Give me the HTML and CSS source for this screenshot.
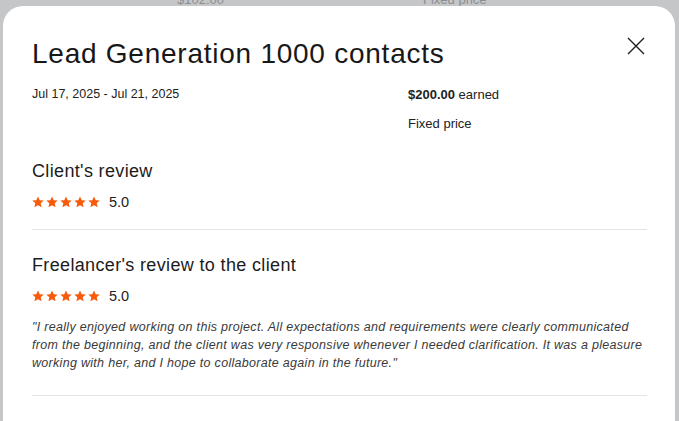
FILE: index.html
```html
<!DOCTYPE html>
<html>
<head>
    <title>Contract details</title>
    <link rel="stylesheet" href="styles.css">
</head>
<body>
    <div class="page-behind">
        <span class="behind-amount">$102.00</span>
        <span class="behind-type">Fixed price</span>
    </div>

    <div class="modal">
        <div class="modal-header">
            <h1>Lead Generation 1000 contacts</h1>
            <button class="close-button" aria-label="Close">
                <svg width="18" height="18" viewBox="0 0 18 18">
                    <path d="M1 1 L17 17 M17 1 L1 17" stroke="#1f1f1f" stroke-width="1.4" fill="none"/>
                </svg>
            </button>
        </div>

        <div class="contract-info">
            <div class="dates">Jul 17, 2025 - Jul 21, 2025</div>
            <div class="earnings">
                <p><strong>$200.00</strong> earned</p>
                <p>Fixed price</p>
            </div>
        </div>

        <div class="review client-review">
            <h2>Client's review</h2>
            <div class="rating">
                <span class="stars" data-count="5"></span>
                <span class="score">5.0</span>
            </div>
        </div>

        <div class="review freelancer-review">
            <h2>Freelancer's review to the client</h2>
            <div class="rating">
                <span class="stars" data-count="5"></span>
                <span class="score">5.0</span>
            </div>
            <p class="feedback">"I really enjoyed working on this project. All expectations and requirements were clearly communicated from the beginning, and the client was very responsive whenever I needed clarification. It was a pleasure working with her, and I hope to collaborate again in the future."</p>
        </div>
    </div>

    <script>
        // fill each rating with star icons
        var starSvg = '<svg width="12" height="12" viewBox="0 0 24 24"><path d="M12 1l3.4 7.3 8 .9-6 5.4 1.7 7.9L12 18.4l-7.1 4.1 1.7-7.9-6-5.4 8-.9z" fill="#f65a0a"/></svg>';
        document.querySelectorAll('.stars').forEach(function (el) {
            var count = parseInt(el.getAttribute('data-count'), 10);
            var html = '';
            for (var i = 0; i < count; i++) {
                html += starSvg;
            }
            el.innerHTML = html;
        });
    </script>
</body>
</html>
```

FILE: styles.css
```css
body {
    font-family: "Liberation Sans", Arial, sans-serif;
    background-color: #c5c6c8;
    margin: 0;
    padding: 0;
    color: #1f1f1f;
    overflow: hidden;
}

.page-behind {
    height: 6px;
    overflow: hidden;
    position: relative;
    color: #8c8e92;
    font-size: 13px;
}

.behind-amount {
    position: absolute;
    left: 177px;
    top: -8px;
}

.behind-type {
    position: absolute;
    left: 423px;
    top: -8px;
}

.modal {
    margin: 0 4px 0 3px;
    background-color: #ffffff;
    border-radius: 20px 20px 0 0;
    padding: 30px 28px 40px 29px;
    height: 420px;
}

.modal-header {
    display: flex;
    justify-content: space-between;
    align-items: flex-start;
}

h1 {
    font-size: 28px;
    font-weight: normal;
    margin: 0;
    line-height: 36px;
    letter-spacing: 0.75px;
    color: #181818;
}

.close-button {
    background: none;
    border: none;
    padding: 0;
    margin: 1px 2px 0 0;
    cursor: pointer;
    width: 18px;
    height: 18px;
}

.contract-info {
    display: grid;
    grid-template-columns: 376px 1fr;
    margin-top: 15px;
    font-size: 12.5px;
    color: #222;
}

.earnings p {
    margin: 0 0 13px 0;
    line-height: 16px;
    font-size: 13px;
}

.earnings strong {
    font-weight: bold;
}

.review {
    border-bottom: 1px solid #e4e4e4;
    padding-bottom: 18px;
}

.client-review {
    padding-top: 8px;
}

.freelancer-review {
    padding-top: 17px;
}

h2 {
    font-size: 18px;
    font-weight: normal;
    margin: 6px 0 10px 0;
    line-height: 24px;
    letter-spacing: 0.35px;
    color: #1c1c1c;
}

.rating {
    display: flex;
    align-items: center;
    gap: 9px;
    height: 18px;
}

.stars {
    display: flex;
    gap: 2px;
}

.stars svg {
    display: block;
}

.score {
    font-size: 14.5px;
    color: #222;
}

.feedback {
    font-style: italic;
    font-size: 12.5px;
    line-height: 18px;
    letter-spacing: 0.3px;
    color: #3a3a3a;
    margin: 13px 0 5px 0;
}
```
